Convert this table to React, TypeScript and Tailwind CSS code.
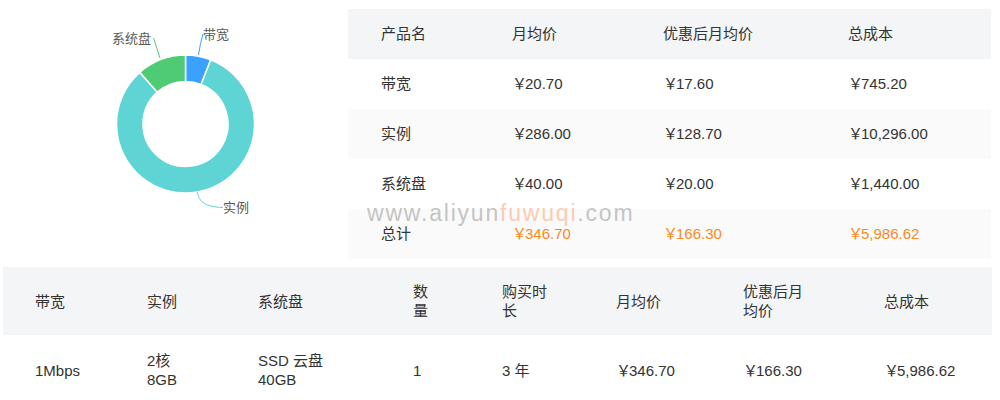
import React from "react";

const CX = 185.5;
const CY = 124;
const RO = 69;
const RI = 42.5;

function pt(r: number, deg: number): [number, number] {
  const a = (deg * Math.PI) / 180;
  return [CX + r * Math.sin(a), CY - r * Math.cos(a)];
}

function arcPath(a0: number, a1: number): string {
  const large = a1 - a0 > 180 ? 1 : 0;
  const [x0, y0] = pt(RO, a0);
  const [x1, y1] = pt(RO, a1);
  const [x2, y2] = pt(RI, a1);
  const [x3, y3] = pt(RI, a0);
  return `M${x0},${y0} A${RO},${RO} 0 ${large} 1 ${x1},${y1} L${x2},${y2} A${RI},${RI} 0 ${large} 0 ${x3},${y3} Z`;
}

const total = 745.2 + 10296 + 1440;
const bw = (745.2 / total) * 360;
const sl = (10296 / total) * 360;

function Chart() {
  return (
    <svg width="348" height="267" viewBox="0 0 348 267">
      <path d={arcPath(0, bw)} fill="#3aa1ff" stroke="#fff" strokeWidth="1.5" />
      <path d={arcPath(bw, bw + sl)} fill="#5fd4d4" stroke="#fff" strokeWidth="1.5" />
      <path d={arcPath(bw + sl, 360)} fill="#4ecb73" stroke="#fff" strokeWidth="1.5" />
      <path d="M198.5,55 Q200,44 203,34" fill="none" stroke="#3aa1ff" strokeWidth="1" />
      <path d="M160,58 L153.5,38" fill="none" stroke="#4ecb73" strokeWidth="1" />
      <path d="M197.5,192 C198.5,202 206,207 223,207.5" fill="none" stroke="#5fd4d4" strokeWidth="1" />
      <text x="203" y="38.5" fontSize="13" fill="#595959" style={{ fontFamily: '"Noto Sans CJK SC", sans-serif' }}>带宽</text>
      <text x="112" y="42.5" fontSize="13" fill="#595959" style={{ fontFamily: '"Noto Sans CJK SC", sans-serif' }}>系统盘</text>
      <text x="223" y="212" fontSize="13" fill="#595959" style={{ fontFamily: '"Noto Sans CJK SC", sans-serif' }}>实例</text>
    </svg>
  );
}

function Price({ v }: { v: string }) {
  return (
    <span>
      <span className="mr-[-2px]">￥</span>
      {v}
    </span>
  );
}

const topRows = [
  { name: "带宽", a: "20.70", b: "17.60", c: "745.20", bg: "bg-white", orange: false },
  { name: "实例", a: "286.00", b: "128.70", c: "10,296.00", bg: "bg-[#fafafa]", orange: false },
  { name: "系统盘", a: "40.00", b: "20.00", c: "1,440.00", bg: "bg-white", orange: false },
  { name: "总计", a: "346.70", b: "166.30", c: "5,986.62", bg: "bg-[#fafafa]", orange: true },
];

function TopTable() {
  return (
    <div className="w-[643px] text-[15px] text-[#333]">
      <div className="flex h-[50px] items-center bg-[#f4f5f7]">
        <div className="w-[131px] pl-[33px]">产品名</div>
        <div className="w-[151px] pl-[33px]">月均价</div>
        <div className="w-[185px] pl-[33px]">优惠后月均价</div>
        <div className="w-[176px] pl-[33px]">总成本</div>
      </div>
      {topRows.map((r) => (
        <div key={r.name} className={`flex h-[50px] items-center ${r.bg}`}>
          <div className="w-[131px] pl-[33px]">{r.name}</div>
          <div className={`w-[151px] pl-[33px] ${r.orange ? "text-[#f7891f]" : ""}`}><Price v={r.a} /></div>
          <div className={`w-[185px] pl-[33px] ${r.orange ? "text-[#f7891f]" : ""}`}><Price v={r.b} /></div>
          <div className={`w-[176px] pl-[33px] ${r.orange ? "text-[#f7891f]" : ""}`}><Price v={r.c} /></div>
        </div>
      ))}
    </div>
  );
}

function BottomTable() {
  return (
    <div className="w-[989px] text-[15px] leading-[19px] text-[#333]">
      <div className="flex h-[68px] items-center bg-[#f4f5f7]">
        <div className="w-[112px] pl-[32px]">带宽</div>
        <div className="w-[111px] pl-[32px]">实例</div>
        <div className="w-[155px] pl-[32px]">系统盘</div>
        <div className="w-[89px] pl-[32px]">数<br />量</div>
        <div className="w-[114px] pl-[32px]">购买时<br />长</div>
        <div className="w-[127px] pl-[32px]">月均价</div>
        <div className="w-[141px] pl-[32px]">优惠后月<br />均价</div>
        <div className="w-[140px] pl-[32px]">总成本</div>
      </div>
      <div className="flex h-[70px] items-center bg-white">
        <div className="w-[112px] pl-[32px]">1Mbps</div>
        <div className="w-[111px] pl-[32px]">2核<br />8GB</div>
        <div className="w-[155px] pl-[32px]">SSD 云盘<br />40GB</div>
        <div className="w-[89px] pl-[32px]">1</div>
        <div className="w-[114px] pl-[32px]">3 年</div>
        <div className="w-[127px] pl-[32px]"><Price v="346.70" /></div>
        <div className="w-[141px] pl-[32px]"><Price v="166.30" /></div>
        <div className="w-[140px] pl-[32px]"><Price v="5,986.62" /></div>
      </div>
    </div>
  );
}

export default function App() {
  return (
    <div
      className="relative h-[400px] w-[1000px] overflow-hidden bg-white"
      style={{ fontFamily: '"Liberation Sans", "Noto Sans CJK SC", sans-serif' }}
    >
      <div className="flex h-[267px]">
        <div className="w-[348px] shrink-0">
          <Chart />
        </div>
        <div className="pt-[9px]">
          <TopTable />
        </div>
      </div>
      <div className="pl-[3px]">
        <BottomTable />
      </div>
      <div className="pointer-events-none absolute left-[367px] top-[201px] text-[23px] leading-[24px] tracking-[1.8px] text-[#bdbdbd]/90">
        www.aliyun<span className="text-[#f9cdb3]">fuwuqi</span>.com
      </div>
    </div>
  );
}
